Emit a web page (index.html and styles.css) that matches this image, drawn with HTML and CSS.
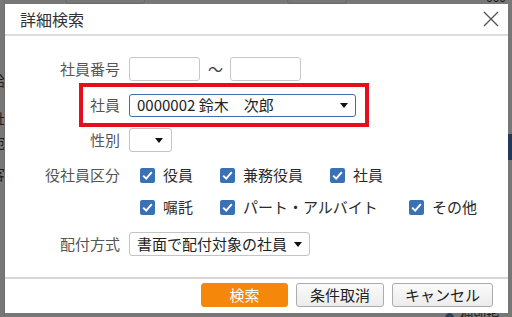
FILE: index.html
```html
<!DOCTYPE html>
<html lang="ja">
<head>
<meta charset="utf-8">
<link rel="stylesheet" href="styles.css">
</head>
<body>
<div class="backdrop">
  <div class="bg-left">
    <span class="bg-ch c1">給</span>
    <span class="bg-ch c2">社</span>
    <span class="bg-ch c3">宛</span>
    <span class="bg-ch c4">客</span>
  </div>
  <div class="bg-mid">
    <div class="bg-top">
      <span class="bg-tab"></span>
      <span class="bg-tab wide"></span>
      <span class="bg-num">000</span>
    </div>
    <div class="bg-bottom"><span class="bg-dot"></span><span class="bg-txt">個別指定</span></div>
  </div>
  <div class="bg-right"><span class="bg-bar"></span></div>
</div>

<div class="modal">
  <div class="modal-head">
    <span class="modal-title">詳細検索</span>
    <svg class="close" width="16" height="16" viewBox="0 0 16 16"><path d="M1 1 L15 15 M15 1 L1 15" stroke="#555" stroke-width="1.4" fill="none"/></svg>
  </div>
  <div class="modal-body">
    <div class="row r1">
      <span class="label">社員番号</span>
      <span class="input w71"></span>
      <span class="tilde">〜</span>
      <span class="input w71"></span>
    </div>
    <div class="hl">
      <span class="label hl-label">社員</span>
      <span class="select sel-main"><span class="sel-text">0000002 鈴木　次郎</span><span class="arrow"></span></span>
    </div>
    <div class="row r3">
      <span class="label">性別</span>
      <span class="select sel-sex"><span class="sel-text"></span><span class="arrow"></span></span>
    </div>
    <div class="row r4">
      <span class="label">役社員区分</span>
      <div class="checks">
        <span class="cb"><svg class="box" width="15" height="15" viewBox="0 0 15 15"><rect x="0" y="0" width="15" height="15" rx="2" fill="#3a71b4"/><path d="M3.2 7.6 L6.2 10.6 L11.8 4.2" stroke="#fff" stroke-width="2" fill="none"/></svg>役員</span>
        <span class="cb"><svg class="box" width="15" height="15" viewBox="0 0 15 15"><rect x="0" y="0" width="15" height="15" rx="2" fill="#3a71b4"/><path d="M3.2 7.6 L6.2 10.6 L11.8 4.2" stroke="#fff" stroke-width="2" fill="none"/></svg>兼務役員</span>
        <span class="cb"><svg class="box" width="15" height="15" viewBox="0 0 15 15"><rect x="0" y="0" width="15" height="15" rx="2" fill="#3a71b4"/><path d="M3.2 7.6 L6.2 10.6 L11.8 4.2" stroke="#fff" stroke-width="2" fill="none"/></svg>社員</span>
      </div>
    </div>
    <div class="row r5">
      <span class="label"></span>
      <div class="checks">
        <span class="cb"><svg class="box" width="15" height="15" viewBox="0 0 15 15"><rect x="0" y="0" width="15" height="15" rx="2" fill="#3a71b4"/><path d="M3.2 7.6 L6.2 10.6 L11.8 4.2" stroke="#fff" stroke-width="2" fill="none"/></svg>嘱託</span>
        <span class="cb wide"><svg class="box" width="15" height="15" viewBox="0 0 15 15"><rect x="0" y="0" width="15" height="15" rx="2" fill="#3a71b4"/><path d="M3.2 7.6 L6.2 10.6 L11.8 4.2" stroke="#fff" stroke-width="2" fill="none"/></svg>パート・アルバイト</span>
        <span class="cb"><svg class="box" width="15" height="15" viewBox="0 0 15 15"><rect x="0" y="0" width="15" height="15" rx="2" fill="#3a71b4"/><path d="M3.2 7.6 L6.2 10.6 L11.8 4.2" stroke="#fff" stroke-width="2" fill="none"/></svg>その他</span>
      </div>
    </div>
    <div class="row r6">
      <span class="label">配付方式</span>
      <span class="select sel-dist"><span class="sel-text">書面で配付対象の社員</span><span class="arrow"></span></span>
    </div>
  </div>
  <div class="modal-foot">
    <span class="btn primary">検索</span>
    <span class="btn w88">条件取消</span>
    <span class="btn w101">キャンセル</span>
  </div>
</div>
</body>
</html>
```

FILE: styles.css
```css
* { box-sizing: border-box; }
html, body { margin: 0; padding: 0; }
body {
  width: 512px;
  height: 317px;
  overflow: hidden;
  position: relative;
  background: #777777;
  font-family: "Noto Sans CJK JP", "Noto Sans", sans-serif;
  font-size: 15px;
  color: #333;
}

/* dimmed page behind the dialog */
.backdrop {
  display: flex;
  width: 512px;
  height: 317px;
}
.bg-left {
  width: 5px;
  overflow: hidden;
  display: flex;
  flex-direction: column;
  border-right: 1px solid #6e6e6e;
}
.bg-ch {
  display: block;
  margin-left: -9px;
  font-size: 14px;
  line-height: 14px;
  color: #1e1e1e;
}
.c1 { margin-top: 73px; }
.c2 { margin-top: 24px; }
.c3 { margin-top: 10px; }
.c4 { margin-top: 18px; }
.bg-mid {
  flex: 1;
  display: flex;
  flex-direction: column;
  justify-content: space-between;
}
.bg-top {
  height: 4px;
  display: flex;
  gap: 12px;
  padding-left: 60px;
  overflow: hidden;
}
.bg-tab {
  width: 80px;
  height: 10px;
  border: 1px solid #6a6a6a;
  border-radius: 3px;
  margin-top: -6px;
}
.bg-tab.wide { width: 60px; margin-left: 130px; }
.bg-num {
  margin-left: auto;
  margin-right: 2px;
  font-size: 12px;
  line-height: 12px;
  margin-top: -9px;
  color: #1e1e1e;
}
.bg-bottom {
  height: 4px;
  overflow: hidden;
  display: flex;
  gap: 6px;
  padding-left: 440px;
}
.bg-dot {
  width: 10px;
  height: 10px;
  border-radius: 50%;
  background: #2c3f5a;
}
.bg-txt {
  font-size: 13px;
  line-height: 13px;
  margin-top: -3px;
  color: #1e1e1e;
}
.bg-right {
  width: 4px;
  display: flex;
  flex-direction: column;
}
.bg-bar {
  display: block;
  height: 26px;
  margin-top: 134px;
  background: #22385a;
}

/* dialog */
.modal {
  position: absolute;
  left: 5px;
  top: 4px;
  width: 503px;
  height: 309px;
  background: #fff;
  display: flex;
  flex-direction: column;
}
.modal-head {
  height: 32px;
  border-bottom: 2px solid #dcdcdc;
  display: flex;
  align-items: center;
  justify-content: space-between;
  padding: 0 9px 0 15px;
}
.modal-title {
  font-size: 16px;
  color: #333;
  line-height: 20px;
  margin-top: -1px;
}
.close { display: block; }

.modal-body {
  height: 241px;
  padding-top: 21px;
}
.row {
  display: flex;
  align-items: center;
  height: 24px;
}
.label {
  width: 115px;
  flex: none;
  text-align: right;
  color: #555;
  margin-right: 9px;
  line-height: 20px;
}
.input {
  display: block;
  height: 24px;
  border: 1px solid #c8c8c8;
  border-radius: 3px;
  background: #fff;
}
.w71 { width: 71px; }
.tilde {
  margin: 0 7px 0 8px;
  color: #444;
  line-height: 20px;
}

.hl {
  display: flex;
  align-items: center;
  margin-top: 2px;
  margin-left: 74px;
  width: 290px;
  height: 44px;
  border: 4px solid #e50e1f;
}
.hl-label { width: 37px; }

.select {
  display: flex;
  align-items: center;
  height: 24px;
  border: 1px solid #c4c4c4;
  border-radius: 3px;
  background: #fff;
  padding: 0 7px;
  color: #222;
  line-height: 20px;
  white-space: nowrap;
}
.sel-text { white-space: nowrap; }
.sel-main {
  width: 227px;
  height: 23px;
  border-color: #3c6fae;
  justify-content: space-between;
}
.sel-sex { width: 43px; justify-content: flex-end; padding-right: 8px; }
.sel-dist { width: 181px; gap: 7px; padding: 0 6px 0 7px; }
.arrow {
  width: 0;
  height: 0;
  border-left: 4px solid transparent;
  border-right: 4px solid transparent;
  border-top: 5px solid #111;
  flex: none;
}

.r3 { margin-top: 1px; }
.r4 { margin-top: 11px; }
.r5 { margin-top: 8px; }
.r6 { margin-top: 13px; }

.checks {
  display: flex;
  align-items: center;
  padding-left: 11px;
}
.cb {
  display: flex;
  align-items: center;
  color: #2a2a2a;
  margin-right: 27px;
  line-height: 20px;
  white-space: nowrap;
}
.cb.wide { margin-right: 31px; }
.box { display: block; margin-right: 8px; flex: none; }

.modal-foot {
  flex: 1;
  border-top: 2px solid #d6d6d6;
  display: flex;
  justify-content: flex-end;
  gap: 8px;
  padding: 4px 15px 0 0;
}
.btn {
  display: flex;
  align-items: center;
  justify-content: center;
  height: 24px;
  border: 1px solid #acacac;
  border-radius: 3px;
  background: linear-gradient(#fafafa, #ececec);
  color: #222;
  line-height: 20px;
}
.btn.primary {
  width: 87px;
  background: #f5870b;
  border-color: #f5870b;
  color: #fff;
}
.w88 { width: 88px; }
.w101 { width: 101px; }
```
